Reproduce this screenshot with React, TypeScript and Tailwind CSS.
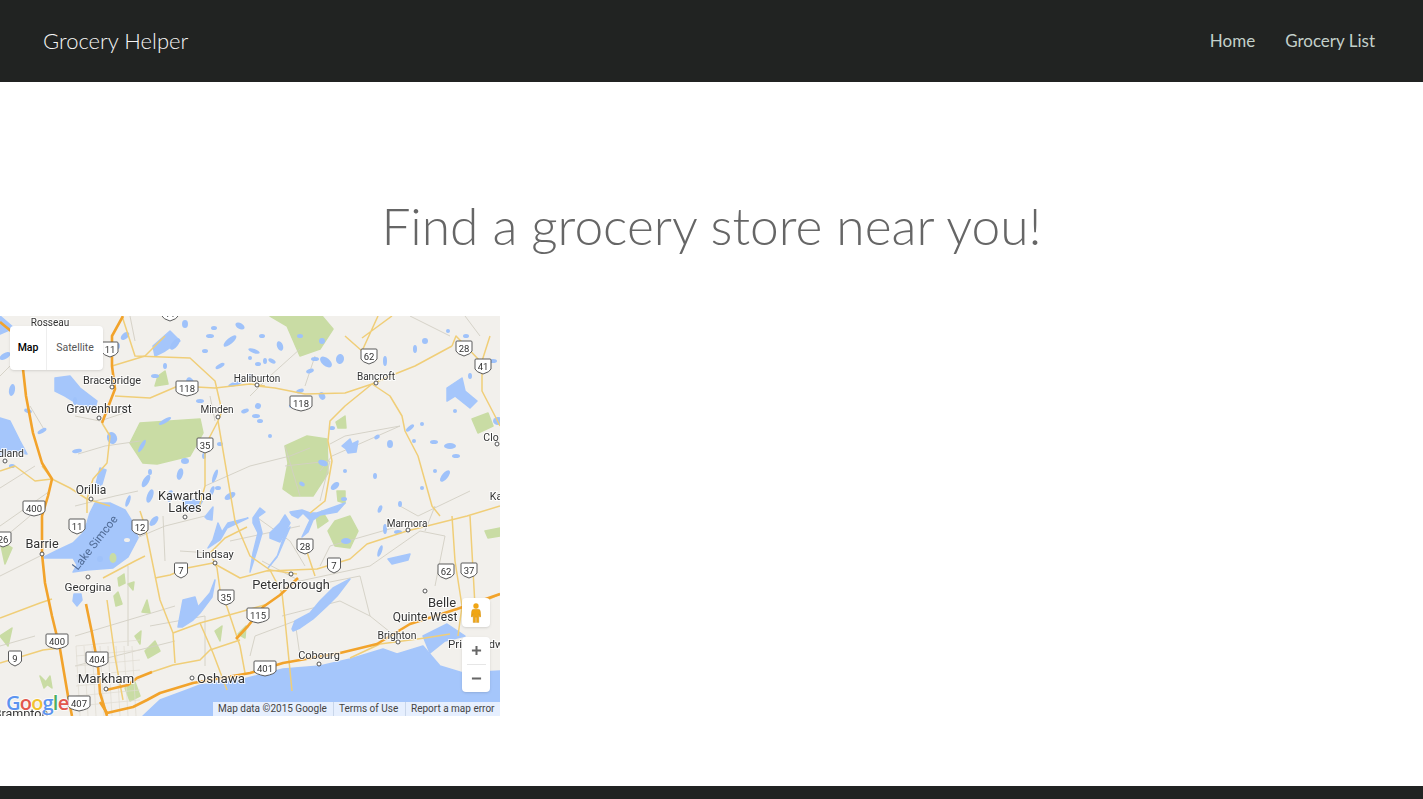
const highways = [
  "M0 6 L17 20 L23 53 L26 80 L33 117 L42 147 L52 163 L48 180 L42 200 L42 238 L45 267 L52 300 L60 333 L68 380 L72 400",
  "M123 0 L112 20 L112 50 L115 73 L102 107",
  "M86 288 L92 317 L98 350 L100 377 L107 400",
  "M106 374 L128 369 L137 362 L152 356",
  "M100 386 L107 397 L133 391 L147 384 L160 377 L193 367 L250 357 L283 347 L340 337 L377 328 L410 308 L457 293 L500 278",
  "M236 323 L248 310 L263 291 L280 279 L298 262",
];

const mainRoads = [
  "M102 107 L110 120 L107 147 L93 163 L87 183 L87 197",
  "M112 50 L145 40 L165 20 M115 80 L150 82 L178 70 L215 72 L250 68 L265 70",
  "M0 155 L15 150 L35 165 L52 163 L70 172 L87 183 L110 190",
  "M122 0 L135 40 L190 42 L215 65 L222 95 L218 105 L235 205 L250 240 L270 254 L282 277 L285 304 L292 375",
  "M218 105 L205 130 L205 170 L198 195",
  "M257 70 L275 72 L305 78 L345 77 L372 68 L390 60 L415 50 L452 30",
  "M372 68 L390 80 L402 100 L405 115 L418 140 L432 190 L440 200",
  "M372 68 L345 90 L330 105 L328 125 L332 145 L325 185 L310 197",
  "M345 20 L362 35 L378 0 M362 22 L392 0 M452 30 L456 20 L480 45",
  "M490 20 L482 45 L482 75 L495 100 L500 110",
  "M140 195 L145 210 L160 284 L173 317 L175 347",
  "M155 262 L170 259 L187 252 L213 247 L240 262 L270 254 L297 258 M267 255 L317 253 L350 243 L367 228 L407 215 L467 200 L500 190",
  "M103 262 L135 245 L145 240",
  "M0 302 L40 287 L52 283 M0 347 L43 334 L60 332",
  "M107 284 L115 341 L123 384",
  "M247 211 L225 222 L210 237 L217 252 L220 274 L227 291 L240 330 L245 357",
  "M173 317 L200 307 L240 296 L268 288 M200 307 L213 337 L227 374",
  "M152 356 L173 349 L200 344 L210 334 L240 324",
  "M452 200 L455 245 L462 290 L458 320 M470 200 L475 290 L500 278",
  "M350 342 L380 328 L425 322 L450 318",
  "M305 230 L315 260 M42 150 L52 163",
];

const minorRoads = [
  "M0 172 L35 150 M0 210 L50 175 M0 225 L30 200 M0 260 L40 240 M0 330 L35 320",
  "M75 190 L115 180 L138 175 M118 230 L165 210 L205 200 M128 250 L128 330",
  "M150 310 L205 300 L205 350 M75 320 L175 290 M75 350 L175 325",
  "M165 245 L163 200 M205 170 L250 150 L290 140 L310 132 M285 130 L300 180",
  "M320 155 L332 140 L400 110 M285 150 L330 145 L320 185 M320 250 L330 230 L400 210",
  "M262 245 L300 265 L370 250 L420 215 M310 270 L360 260 L370 300 L395 320",
  "M282 300 L340 285 L370 300 M250 340 L255 320 L295 305 L300 340",
  "M400 190 L418 200 L470 175 M425 215 L435 190 M420 215 L445 220 L435 270",
  "M0 60 L20 40 M30 90 L45 115 M75 100 L100 105 L130 95 M78 138 L105 130 L140 125",
  "M210 80 L215 105 M250 80 L270 60 L300 33 M315 40 L305 70 M330 128 L345 120 L400 110",
  "M40 10 L55 50 M130 0 L135 25 M465 0 L480 20 M410 0 L450 20 M470 380 L500 390",
  "M255 200 L290 225 L305 250 M230 225 L300 210 M180 235 L210 237",
];

const gridX = [76, 84, 92, 100, 108, 116, 124, 132];
const gridY = [330, 340, 350, 360, 370, 380, 390];

const bigLakes = [
  "M95 187 L90 197 L87 207 L83 217 L73 227 L58 234 L42 242 L58 242 L73 242 L77 249 L73 256 L87 254 L113 252 L128 241 L138 222 L133 207 L125 194 L110 187 Z",
  "M100 152 L106 154 L102 168 L95 172 Z",
  "M74 278 L81 278 L82 284 L77 290 L73 285 Z",
  "M0 102 L10 105 L20 125 L27 138 L12 135 L0 140 Z",
  "M55 62 L70 60 L80 72 L97 85 L95 92 L78 88 L65 80 L55 75 Z",
  "M205 201 L213 191 L212 204 L207 203 Z",
  "M218 207 L213 224 L208 232 L220 224 L227 212 L248 202 L228 207 L222 216 Z",
  "M253 202 L260 192 L265 196 L258 201 L262 217 L257 234 L250 256 L253 237 L258 217 L253 207 Z",
  "M270 217 L280 207 L285 199 L290 207 L285 217 L280 226 L270 222 Z",
  "M285 217 L277 241 L268 252 L278 239 L290 211 Z",
  "M290 196 L302 194 L310 197 L317 197 L345 187 L337 196 L320 199 L313 204 L308 216 L302 221 L310 204 L303 197 L298 202 L292 199 Z",
  "M178 311 L183 284 L195 281 L198 291 L210 277 L215 264 L212 281 L200 297 L193 304 L182 311 Z",
  "M183 184 L203 184 L197 194 L187 195 Z",
  "M292 313 L295 305 L310 297 L320 285 L333 272 L350 263 L337 280 L327 290 L313 303 L300 312 L293 315 Z",
  "M143 400 L160 384 L187 374 L200 369 L240 364 L283 353 L320 350 L350 343 L383 333 L397 338 L423 330 L440 350 L463 357 L500 355 L500 400 Z",
  "M423 320 L447 308 L465 320 L445 325 L430 337 Z",
  "M388 243 L410 238 L408 244 L392 248 Z M447 72 L462 62 L465 75 L477 85 L470 92 L455 80 L447 85 Z",
  "M0 0 L14 12 L0 18 Z M153 30 L170 15 L180 25 L165 35 L155 40 Z M72 20 L85 15 L88 28 L75 30 Z",
  "M342 130 L350 123 L352 128 L358 125 L356 136 L348 137 L346 133 Z",
];

const pondList = [
  [5,40,6,3,-30],[32,20,5,2,40],[12,74,3,6,10],[28,95,4,2,20],[42,115,5,2,-30],[112,122,5,6,-20],[77,135,5,2,-10],[142,130,2,7,30],[146,165,3,7,30],
  [128,185,2,6,20],[154,205,3,6,40],[180,158,3,6,15],[215,160,2,7,20],[235,68,7,2,-15],[165,105,7,2,-30],[200,85,4,2,0],[230,25,8,3,-40],[240,10,5,3,30],
  [175,28,7,3,-50],[155,60,4,2,0],[190,65,4,3,40],[220,50,5,2,-30],[205,35,3,2,0],[245,95,4,2,-20],[165,50,2,3,0],[250,42,2,2,0],
  [254,35,6,2,20],[280,30,3,5,-20],[262,20,3,2,0],[300,20,3,2,0],[272,45,4,2,30],[258,48,3,2,0],[310,55,4,2,-20],[315,43,4,2,0],[322,80,3,4,-30],
  [300,75,4,2,-20],[292,90,3,2,0],[260,105,3,2,0],[332,112,3,2,0],[258,90,3,3,20],[265,45,2,3,0],[326,46,7,4,40],[340,43,4,5,10],[322,25,3,3,0],
  [302,168,3,2,30],[335,170,5,3,-40],[344,183,3,2,0],[323,147,5,3,20],[345,155,2,2,0],[390,128,3,4,0],[410,112,5,2,-40],[422,108,2,2,0],[414,125,2,2,0],
  [455,95,2,2,0],[434,126,4,2,0],[456,140,4,2,0],[498,105,5,4,0],[385,45,2,5,0],[415,33,2,4,0],[425,25,3,3,0],[448,15,2,2,0],
  [466,20,3,2,0],[435,155,2,2,0],[375,160,2,3,0],[380,193,2,4,20],[400,188,2,3,0],[422,172,2,2,0],[380,235,2,6,20],[346,225,5,3,0],[398,216,4,2,0],[385,213,2,5,0],
  [270,120,2,2,0],[256,100,4,2,0],[75,85,2,4,0],[118,30,2,3,0],[125,20,5,3,-40],[150,180,3,7,20],[150,156,2,3,0],[185,145,4,3,0],[170,180,3,6,15],[212,175,2,5,20],
  [230,180,6,3,-30],[204,140,2,3,0],[218,172,3,2,0],[220,128,3,2,0],[250,60,3,2,0],[214,12,3,2,0],[185,8,3,4,0],[210,20,4,2,0],[12,150,3,2,0],[60,42,2,3,0],
  [100,243,3,3,0],[445,160,3,7,40],[450,130,6,3,0],[493,45,4,2,0],[470,60,2,3,0],[377,121,3,2,-30],
];

const parks = [
  "M270 0 L322 0 L333 13 L320 33 L300 40 L287 10 Z",
  "M285 130 L307 120 L327 123 L328 157 L313 180 L293 180 L283 173 L288 147 Z",
  "M130 127 L140 107 L200 103 L203 117 L190 140 L157 148 L143 147 Z",
  "M472 103 L488 97 L493 110 L478 117 Z",
  "M158 60 L165 55 L168 68 L155 70 Z M336 106 L345 100 L346 112 L338 112 Z M337 175 L345 175 L345 187 L338 185 Z",
  "M328 215 L335 205 L350 200 L358 215 L350 232 L335 230 Z M316 200 L322 195 L328 205 L318 212 Z",
  "M0 225 L12 232 L5 248 Z M113 238 L117 240 L116 247 L111 245 Z",
  "M118 262 L124 258 L125 267 L119 270 Z M114 280 L118 276 L122 288 L116 290 Z M128 268 L134 266 L133 274 Z",
  "M145 335 L155 325 L160 335 L148 342 Z M142 296 L147 284 L150 297 Z M135 320 L141 315 L140 328 Z M215 315 L222 310 L220 325 Z",
  "M485 215 L500 212 L500 220 L488 222 Z M0 320 L12 312 L8 330 Z M45 367 L50 360 L52 372 Z",
  "M125 372 L135 366 L140 380 L130 385 Z M238 318 L246 310 L245 322 Z M40 360 L48 368 L44 372 Z",
];

const labels: [string, number, number, number][] = [
  ["Rosseau", 50, 10, 10], ["Bracebridge", 112, 68, 10.9], ["Gravenhurst", 99, 97, 12.2], ["dland", 11, 141, 10.5], ["Orillia", 91, 178, 12],
  ["Kawartha", 185, 184, 12.7], ["Lakes", 185, 196, 12.7], ["Barrie", 42, 232, 12.7], ["Georgina", 88, 275, 11.7], ["Markham", 106, 367, 13.4],
  ["Brampton", 21, 402, 12.5], ["Oshawa", 221, 367, 13.3], ["Peterborough", 291, 273, 12.8], ["Lindsay", 215, 242, 11], ["Marmora", 407, 211, 10],
  ["Quinte West", 425, 305, 12], ["Brighton", 397, 323, 10.4], ["Cobourg", 319, 343, 11], ["Pri", 455, 332, 11.5], ["Edw", 493, 332, 11],
  ["Haliburton", 257, 66, 10], ["Minden", 217, 97, 10], ["Bancroft", 376, 64, 10], ["Clo", 491, 125, 10.5], ["Ka", 496, 184, 10.5],
  ["Belle", 442, 291, 13],
];

const dots = [
  [112,71],[99,102],[91,183],[5,145],[42,238],[88,261],[106,373],[192,362],[291,258],[215,247],[408,214],[425,275],[398,326],[319,348],[257,69],[218,101],[376,67],[497,128],[185,201],
];

const shields: [string, number, number][] = [
  ["11", 110, 33], ["118", 187, 72], ["118", 301, 87], ["62", 369, 40], ["28", 464, 32], ["41", 483, 50], ["35", 205, 129],
  ["400", 34, 192], ["26", 3, 223], ["11", 77, 210], ["12", 140, 211], ["7", 181, 254], ["35", 226, 281], ["28", 305, 230],
  ["7", 334, 249], ["115", 258, 299], ["62", 446, 255], ["37", 469, 254], ["400", 57, 325], ["9", 15, 342], ["404", 97, 343],
  ["401", 265, 352], ["407", 79, 387], ["11", 170, -3],
];

function MapDrawing() {
  return (
    <svg viewBox="0 0 500 400" className="block h-[400px] w-[500px] blur-[0.35px]">
      <rect width="500" height="400" fill="#f2f0ec" />
      {parks.map((d) => (
        <path key={d} d={d} fill="#c9dca4" stroke="#c9dca4" strokeWidth="1.5" strokeLinejoin="round" />
      ))}
      {minorRoads.map((d) => (
        <path key={d} d={d} fill="none" stroke="#d3cfc4" strokeWidth="0.9" />
      ))}
      {gridX.map((x) => (
        <line key={x} x1={x} y1="330" x2={x + 4} y2="400" stroke="#dfdbd1" strokeWidth="0.7" />
      ))}
      {gridY.map((y) => (
        <line key={y} x1="76" y1={y} x2="140" y2={y - 6} stroke="#dfdbd1" strokeWidth="0.7" />
      ))}
      {bigLakes.map((d) => (
        <path key={d} d={d} fill="#a5c6fb" stroke="#a5c6fb" strokeWidth="1.5" strokeLinejoin="round" />
      ))}
      <ellipse cx="113" cy="242" rx="3.5" ry="5" fill="#c9dca4" />
      <ellipse cx="127" cy="224" rx="3" ry="2" fill="#f2f0ec" />
      {pondList.map(([x, y, rx, ry, r], i) => (
        <ellipse key={i} cx={x} cy={y} rx={rx} ry={ry} transform={`rotate(${r} ${x} ${y})`} fill="#9fc2fa" />
      ))}
      {mainRoads.map((d) => (
        <path key={d} d={d} fill="none" stroke="#f0ce78" strokeWidth="1.5" strokeLinejoin="round" />
      ))}
      {highways.map((d) => (
        <path key={d} d={d} fill="none" stroke="#f2a32b" strokeWidth="2.6" strokeLinejoin="round" />
      ))}
      <text
        x="98"
        y="229"
        textAnchor="middle"
        transform="rotate(-52 98 229)"
        fontFamily="Roboto, sans-serif"
        fontSize="11.5"
        fill="#4f6a94"
      >
        Lake Simcoe
      </text>
      {labels.map(([name, x, y, size]) => (
        <text
          key={name + x}
          x={x}
          y={y}
          textAnchor="middle"
          fontFamily="Roboto, sans-serif"
          fontSize={size}
          fill="#333"
          stroke="#ffffffd0"
          strokeWidth="2"
          paintOrder="stroke"
        >
          {name}
        </text>
      ))}
      {dots.map(([x, y]) => (
        <circle key={`${x}-${y}`} cx={x} cy={y} r="2" fill="#fff" stroke="#444" strokeWidth="0.9" />
      ))}
      {shields.map(([num, x, y]) => {
        const w = num.length > 2 ? 10 : num.length > 1 ? 7 : 5.5;
        return (
          <g key={`${num}-${x}`}>
            <path
              d={`M${x - w} ${y - 7} H${x + w} Q${x + w + 1} ${y - 7} ${x + w + 1} ${y - 6} V${y + 3} Q${x + w} ${y + 6} ${x} ${y + 8} Q${x - w} ${y + 6} ${x - w - 1} ${y + 3} V${y - 6} Q${x - w - 1} ${y - 7} ${x - w} ${y - 7} Z`}
              fill="#fff"
              stroke="#5a5a5a"
              strokeWidth="1"
            />
            <text x={x} y={y + 3.5} textAnchor="middle" fontFamily="Roboto, sans-serif" fontSize="9.5" fill="#333">
              {num}
            </text>
          </g>
        );
      })}
    </svg>
  );
}

function MapBlock() {
  return (
    <div className="relative h-[400px] w-[500px] overflow-hidden font-['Roboto',sans-serif]">
      <MapDrawing />

      <div className="absolute left-[10px] top-[10px] flex h-[44px] w-[93px] items-center rounded-sm bg-white text-[10.5px] shadow-sm">
        <span className="flex h-full w-[37px] items-center justify-center border-r border-[#eeeeee] font-medium text-black">Map</span>
        <span className="flex h-full flex-1 items-center justify-center text-[#565656]">Satellite</span>
      </div>

      <div className="absolute left-[462px] top-[282px] flex h-[29px] w-[28px] items-center justify-center rounded-sm bg-white shadow-sm">
        <svg viewBox="0 0 12 24" className="h-[20px] w-[10px]">
          <circle cx="6" cy="3.6" r="3.2" fill="#f0a513" />
          <path d="M3 7.5 H9 Q10.8 7.5 11.2 10 L12 16.5 H10 L9.4 13 V23.5 H6.5 V17 H5.5 V23.5 H2.6 V13 L2 16.5 H0 L0.8 10 Q1.2 7.5 3 7.5 Z" fill="#f0a513" stroke="#c98a10" strokeWidth="0.4" />
        </svg>
      </div>

      <div className="absolute left-[462px] top-[321px] flex h-[55px] w-[28px] flex-col items-center rounded-sm bg-white shadow-sm">
        <div className="flex h-[27px] items-center justify-center">
          <svg viewBox="0 0 12 12" className="h-[11px] w-[11px]">
            <path d="M6 1 V11 M1 6 H11" stroke="#666" strokeWidth="2.2" />
          </svg>
        </div>
        <div className="h-px w-[19px] bg-[#e6e6e6]" />
        <div className="flex h-[27px] items-center justify-center">
          <svg viewBox="0 0 12 12" className="h-[11px] w-[11px]">
            <path d="M1 6 H11" stroke="#666" strokeWidth="2.2" />
          </svg>
        </div>
      </div>

      <div className="absolute bottom-[3px] left-[6px] flex font-['Open_Sans',sans-serif] text-[20px] font-semibold leading-none tracking-[-0.8px] [-webkit-text-stroke:2px_#ffffffb0] [paint-order:stroke]">
        <span className="text-[#5c94f0]">G</span>
        <span className="text-[#e2584c]">o</span>
        <span className="text-[#f2c230]">o</span>
        <span className="text-[#5c94f0]">g</span>
        <span className="text-[#4cae5f]">l</span>
        <span className="text-[#e2584c]">e</span>
      </div>

      <div className="absolute bottom-0 right-0 flex h-[14px] w-[287px] items-center bg-[#ffffffb8] text-[10px] leading-none text-[#444]">
        <span className="w-[120px] pl-[5px]">Map data ©2015 Google</span>
        <span className="flex h-full w-[72px] items-center border-l border-[#c9d6ea] pl-[5px]">Terms of Use</span>
        <span className="flex h-full flex-1 items-center border-l border-[#c9d6ea] pl-[5px]">Report a map error</span>
      </div>
    </div>
  );
}

export default function App() {
  return (
    <div className="flex h-screen flex-col overflow-hidden bg-white font-['Lato',sans-serif]">
      <nav className="flex h-[82px] shrink-0 items-center justify-between bg-[#212322] pl-[43px] pr-[48px]">
        <a className="pb-[2px] text-[22px] font-light text-[#f5f5f5]">Grocery Helper</a>
        <div className="flex gap-[30px] text-[17px] text-[#c3d0ca]">
          <a>Home</a>
          <a>Grocery List</a>
        </div>
      </nav>

      <main className="h-[704px] shrink-0">
        <h1 className="pt-[108px] text-center text-[51.5px] font-light leading-[70px] text-[#666666]">
          Find a grocery store near you!
        </h1>
        <div className="mt-[56px]">
          <MapBlock />
        </div>
      </main>

      <footer className="flex-1 bg-[#212322]" />
    </div>
  );
}
